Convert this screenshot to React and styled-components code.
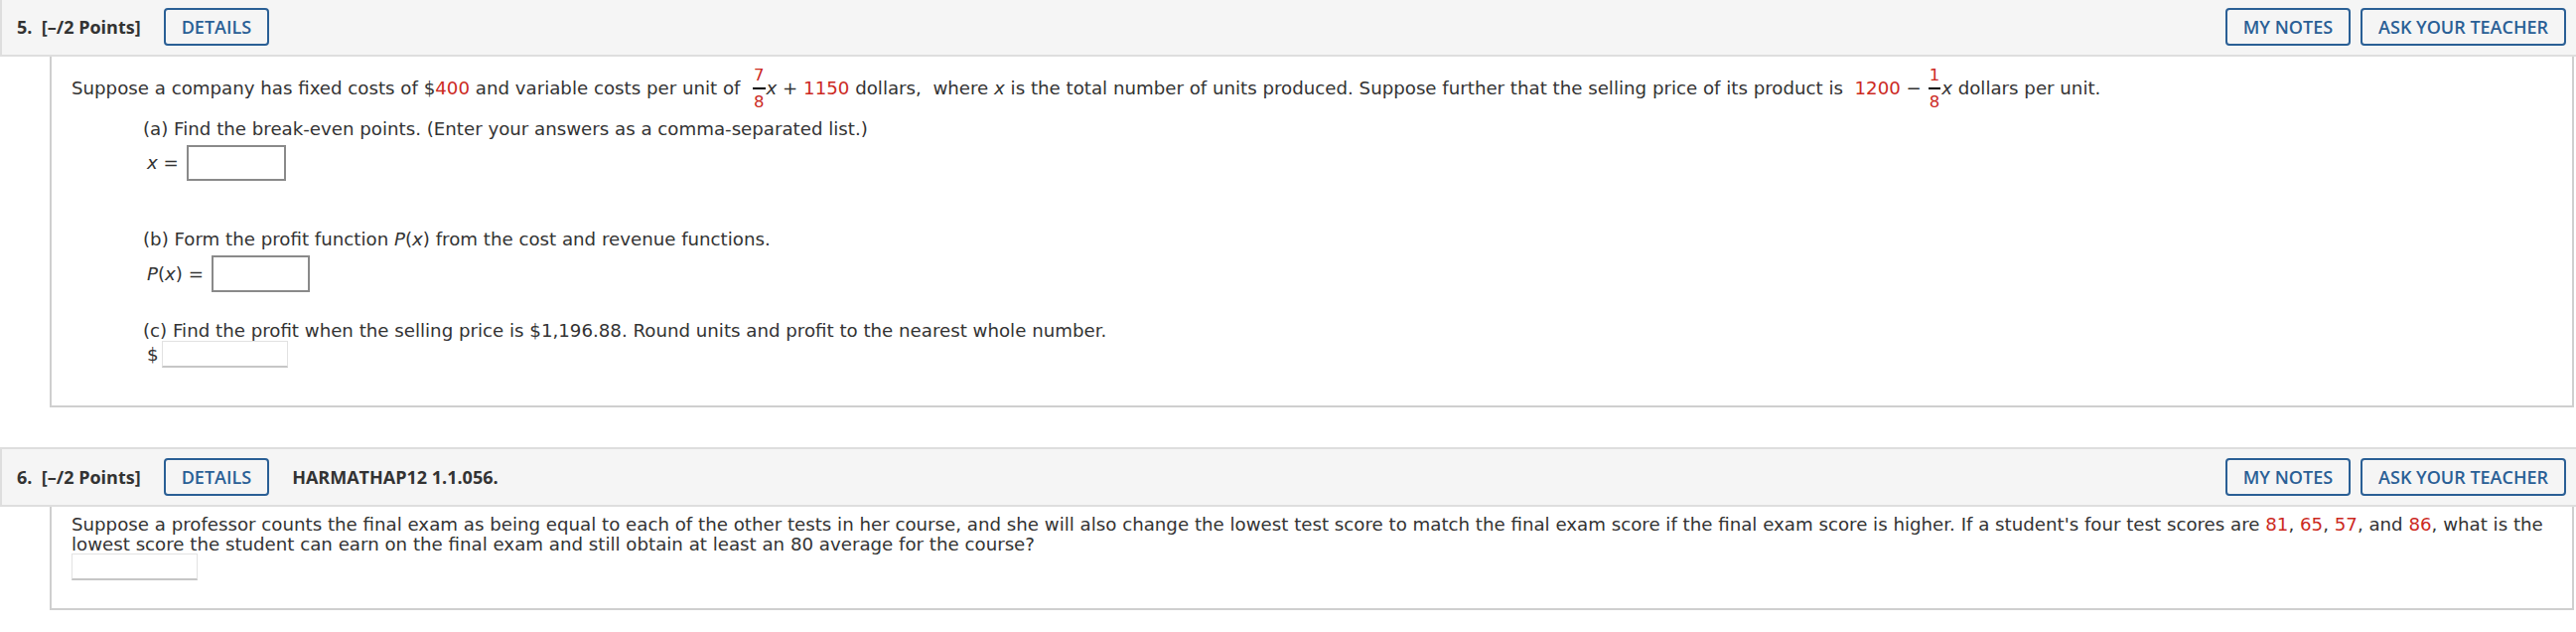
import React from 'react';
import styled, { createGlobalStyle } from 'styled-components';

const Global = createGlobalStyle`
  html, body { margin: 0; padding: 0; background: #fff; }
  body { font-family: "DejaVu Sans", Verdana, sans-serif; color: #333; }
`;

const Page = styled.div`
  margin-top: -3px;
  display: flex;
  flex-direction: column;
  gap: 40px;
`;

const Question = styled.section`
  display: flex;
  flex-direction: column;
`;

const Header = styled.header`
  display: flex;
  align-items: center;
  height: 56px;
  background: #f5f5f5;
  border: 2px solid #dedede;
  border-right: none;
  padding: 0 10px 0 15px;
  font-family: "Open Sans", sans-serif;
  color: #333;
`;

const Points = styled.span`
  font-weight: 700;
  font-size: 18px;
  white-space: pre;
  margin-right: 23px;
`;

const Title = styled.span`
  font-weight: 700;
  font-size: 18px;
  margin-left: 23px;
`;

const Spacer = styled.div`
  flex: 1;
`;

const OutlineButton = styled.button`
  box-sizing: border-box;
  height: 38px;
  padding: 0 16px;
  background: transparent;
  border: 2px solid #2a5f95;
  border-radius: 4px;
  color: #2a5f95;
  font-family: "Open Sans", sans-serif;
  font-weight: 600;
  font-size: 18px;
  cursor: pointer;
  & + & { margin-left: 10px; }
`;

const Body = styled.div`
  margin-left: 50px;
  margin-right: 2px;
  border-left: 2px solid #cfcfcf;
  border-right: 2px solid #cfcfcf;
  border-bottom: 2px solid #cfcfcf;
  padding: ${p => p.$pt}px 20px ${p => p.$pb}px 20px;
  font-size: 18.2px;
  line-height: 20px;
`;

const Para = styled.div`
  margin-left: ${p => p.$indent || 0}px;
  margin-top: ${p => p.$mt || 0}px;
  white-space: pre-wrap;
`;

const Red = styled.span`
  color: #cc2a1f;
`;

const Var = styled.i`
  font-style: italic;
`;

const Frac = styled.span`
  display: inline-flex;
  flex-direction: column;
  align-items: center;
  vertical-align: middle;
  font-size: 16.5px;
  line-height: 16px;
  margin: 0 1px;
  color: #cc2a1f;
`;

const Num = styled.span`
  padding: 0 1px 4px;
`;

const Den = styled.span`
  align-self: stretch;
  text-align: center;
  border-top: 2px solid #000;
  padding: 5px 1px 0;
`;

const AnswerRow = styled.div`
  display: flex;
  align-items: center;
  gap: ${p => p.$gap ?? 8}px;
  margin-left: ${p => p.$indent || 0}px;
  margin-top: ${p => p.$mt || 0}px;
`;

const MathBox = styled.span`
  display: inline-block;
  box-sizing: border-box;
  width: ${p => p.$w}px;
  height: ${p => p.$h}px;
  border: 2px solid #8a8a8a;
  background: #fff;
`;

const PlainBox = styled.span`
  display: inline-block;
  box-sizing: border-box;
  width: 127px;
  height: 27px;
  border: 1px solid #e2e2e2;
  border-bottom: 2px solid #c6c6c6;
  background: #fff;
`;

export default function App() {
  return (
    <>
      <Global />
      <Page>
        <Question>
          <Header>
            <Points>{'5.  [–/2 Points]'}</Points>
            <OutlineButton>DETAILS</OutlineButton>
            <Spacer />
            <OutlineButton>MY NOTES</OutlineButton>
            <OutlineButton>ASK YOUR TEACHER</OutlineButton>
          </Header>
          <Body $pt={11} $pb={38}>
            <Para>
              Suppose a company has fixed costs of $<Red>400</Red> and variable costs per unit of{'  '}
              <Frac><Num>7</Num><Den>8</Den></Frac><Var>x</Var> + <Red>1150</Red> dollars,{'  '}where <Var>x</Var> is the total number of units produced. Suppose further that the selling price of its product is{'  '}<Red>1200</Red> − <Frac><Num>1</Num><Den>8</Den></Frac><Var>x</Var> dollars per unit.
            </Para>
            <Para $indent={72} $mt={9}>
              (a) Find the break-even points. (Enter your answers as a comma-separated list.)
            </Para>
            <AnswerRow $indent={76} $mt={6}>
              <span><Var>x</Var> =</span>
              <MathBox $w={100} $h={36} />
            </AnswerRow>
            <Para $indent={72} $mt={49}>
              (b) Form the profit function <Var>P</Var>(<Var>x</Var>) from the cost and revenue functions.
            </Para>
            <AnswerRow $indent={76} $mt={6}>
              <span><Var>P</Var>(<Var>x</Var>) =</span>
              <MathBox $w={99} $h={37} />
            </AnswerRow>
            <Para $indent={72} $mt={29}>
              (c) Find the profit when the selling price is $1,196.88. Round units and profit to the nearest whole number.
            </Para>
            <AnswerRow $indent={76} $mt={0} $gap={3}>
              <span>$</span>
              <PlainBox />
            </AnswerRow>
          </Body>
        </Question>
        <Question>
          <Header>
            <Points>{'6.  [–/2 Points]'}</Points>
            <OutlineButton>DETAILS</OutlineButton>
            <Title>HARMATHAP12 1.1.056.</Title>
            <Spacer />
            <OutlineButton>MY NOTES</OutlineButton>
            <OutlineButton>ASK YOUR TEACHER</OutlineButton>
          </Header>
          <Body $pt={8} $pb={28}>
            <Para>
              Suppose a professor counts the final exam as being equal to each of the other tests in her course, and she will also change the lowest test score to match the final exam score if the final exam score is higher. If a student's four test scores are <Red>81</Red>, <Red>65</Red>, <Red>57</Red>, and <Red>86</Red>, what is the lowest score the student can earn on the final exam and still obtain at least an 80 average for the course?
            </Para>
            <AnswerRow $mt={-1}>
              <PlainBox />
            </AnswerRow>
          </Body>
        </Question>
      </Page>
    </>
  );
}
